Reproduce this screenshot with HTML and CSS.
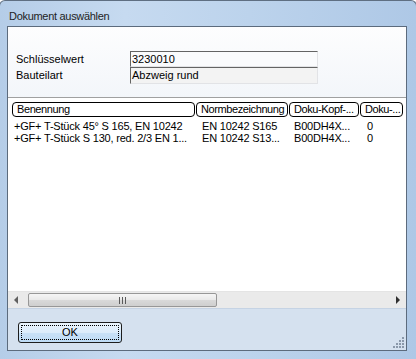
FILE: index.html
```html
<!DOCTYPE html>
<html lang="de">
<head>
    <meta charset="UTF-8">
    <title>Dokument auswählen</title>
    <link rel="stylesheet" href="styles.css">
</head>
<body>
    <div class="window">
        <div class="titlebar">Dokument auswählen</div>
        <div class="client">
            <div class="keys">
                <label>Schlüsselwert</label>
                <div class="field">3230010</div>
                <label>Bauteilart</label>
                <div class="field readonly">Abzweig rund</div>
            </div>

            <div class="list">
                <div class="header">
                    <div class="col c1"><span class="head">Benennung</span></div>
                    <div class="col c2"><span class="head">Normbezeichnung</span></div>
                    <div class="col c3"><span class="head">Doku-Kopf-...</span></div>
                    <div class="col c4"><span class="head">Doku-...</span></div>
                </div>
                <div class="rows">
                    <div class="row">
                        <div class="col c1">+GF+ T-Stück 45° S 165, EN 10242</div>
                        <div class="col c2">EN 10242 S165</div>
                        <div class="col c3">B00DH4X...</div>
                        <div class="col c4">0</div>
                    </div>
                    <div class="row">
                        <div class="col c1">+GF+ T-Stück S 130, red. 2/3 EN 1...</div>
                        <div class="col c2">EN 10242 S13...</div>
                        <div class="col c3">B00DH4X...</div>
                        <div class="col c4">0</div>
                    </div>
                </div>
                <div class="hscroll">
                    <div class="arrow left"></div>
                    <div class="track">
                        <div class="thumb"><span class="grip"></span></div>
                    </div>
                    <div class="arrow right"></div>
                </div>
            </div>

            <div class="footer">
                <button class="ok"><span class="focus">OK</span></button>
                <svg class="sizegrip" width="12" height="12" viewBox="0 0 12 12">
                    <g fill="#8a98aa">
                        <rect x="9" y="0" width="2" height="2"/>
                        <rect x="6" y="3" width="2" height="2"/>
                        <rect x="9" y="3" width="2" height="2"/>
                        <rect x="3" y="6" width="2" height="2"/>
                        <rect x="6" y="6" width="2" height="2"/>
                        <rect x="9" y="6" width="2" height="2"/>
                        <rect x="0" y="9" width="2" height="2"/>
                        <rect x="3" y="9" width="2" height="2"/>
                        <rect x="6" y="9" width="2" height="2"/>
                        <rect x="9" y="9" width="2" height="2"/>
                    </g>
                </svg>
            </div>
        </div>
    </div>
</body>
</html>
```

FILE: styles.css
```css
html, body {
    margin: 0;
    padding: 0;
}
body {
    width: 416px;
    height: 359px;
    overflow: hidden;
    background: #ffffff;
    font-family: 'Liberation Sans', Arial, sans-serif;
    font-size: 11px;
    color: #000;
}
.window {
    box-sizing: border-box;
    width: 418px;
    height: 359px;
    margin-left: -1px;
    display: flex;
    flex-direction: column;
    padding: 0 9px 8px 7px;
    background: linear-gradient(90deg, #b5cde8 0%, #c6daf0 30%, #bcd3ec 60%, #aec8e6 100%);
    border: 1px solid #5f6f82;
    border-bottom: none;
    border-radius: 6px 6px 0 0;
}
.titlebar {
    height: 25px;
    box-sizing: border-box;
    padding: 8px 0 0 2px;
    line-height: 14px;
    font-size: 11px;
    letter-spacing: -0.3px;
    color: #1e1e1e;
    flex-shrink: 0;
}
.client {
    flex: 1;
    display: flex;
    flex-direction: column;
    border: 1px solid #5c6b7d;
    background: #fff;
    min-height: 0;
}
.keys {
    height: 70px;
    box-sizing: border-box;
    padding: 24px 0 0 8px;
    display: grid;
    grid-template-columns: 114px 188px;
    grid-auto-rows: 16px;
    align-items: center;
    background: linear-gradient(180deg, #fdfdfe 0%, #f3f6fa 100%);
}
.field {
    box-sizing: border-box;
    height: 16px;
    line-height: 14px;
    padding-left: 1px;
    border: 1px solid #e2e3e6;
    border-top-color: #646464;
    border-left-color: #646464;
    background: #fafbfd;
}
.field.readonly {
    height: 17px;
    background: #f3f3f3;
}
.list {
    flex: 1;
    display: flex;
    flex-direction: column;
    border-top: 1px solid #a0a0a0;
    background: #fff;
    min-height: 0;
}
.header, .row {
    display: flex;
    padding-left: 3px;
}
.header {
    padding-left: 4px;
    margin-top: 4px;
    height: 15px;
}
.col {
    flex-shrink: 0;
    white-space: nowrap;
    overflow: hidden;
    box-sizing: border-box;
}
.c1 { width: 185px; }
.c2 { width: 93px; }
.c3 { width: 71px; }
.c4 { width: 44px; }
.header .c1 { width: 184px; }
.header .col {
    padding-right: 1px;
}
.head {
    display: block;
    box-sizing: border-box;
    height: 15px;
    line-height: 13px;
    padding-left: 4px;
    border: 1px solid #000;
    border-radius: 4px;
    background: #fff;
    letter-spacing: -0.4px;
}
.rows {
    flex: 1;
    padding-top: 3px;
}
.row {
    height: 12px;
    line-height: 12px;
    letter-spacing: -0.2px;
}
.row .c1 { padding-left: 3px; }
.row .c2 { padding-left: 6px; }
.row .c3 { padding-left: 5px; }
.row .c4 { padding-left: 7px; }
.hscroll {
    height: 16px;
    display: flex;
    align-items: center;
    background: #eaeaea;
    border-top: 1px solid #e4e4e4;
    flex-shrink: 0;
}
.arrow {
    width: 19px;
    height: 16px;
    position: relative;
    flex-shrink: 0;
}
.arrow::after {
    content: '';
    position: absolute;
    top: 4px;
    border-top: 4px solid transparent;
    border-bottom: 4px solid transparent;
}
.arrow.left::after {
    left: 6px;
    border-right: 4px solid #606060;
}
.arrow.right::after {
    left: 9px;
    border-left: 4px solid #303030;
}
.track {
    flex: 1;
    height: 14px;
}
.thumb {
    box-sizing: border-box;
    width: 189px;
    height: 14px;
    margin-left: 1px;
    border: 1px solid #979797;
    border-radius: 2px;
    background: linear-gradient(180deg, #f5f5f5 0%, #e9e9e9 50%, #d9d9d9 51%, #cfcfcf 100%);
    display: flex;
    align-items: center;
    justify-content: center;
}
.grip {
    width: 7px;
    height: 7px;
    background: repeating-linear-gradient(90deg, #5a5a5a 0 1px, transparent 1px 3px);
}
.footer {
    height: 42px;
    flex-shrink: 0;
    position: relative;
    background: #d5e1ef;
    border-top: 1px solid #c5d3e4;
    box-sizing: border-box;
}
.ok {
    margin: 13px 0 0 10px;
    width: 104px;
    height: 21px;
    padding: 2px;
    border: 1px solid #1d1d1d;
    border-radius: 3px;
    background: linear-gradient(180deg, #eaf4fc 0%, #dcecfb 50%, #c9e1f7 51%, #bedbf5 100%);
    font-family: 'Liberation Sans', Arial, sans-serif;
    font-size: 11px;
    color: #000;
    display: flex;
}
.ok .focus {
    flex: 1;
    border: 1px dotted #000;
    border-radius: 1px;
    line-height: 13px;
    text-align: center;
}
.sizegrip {
    position: absolute;
    right: 1px;
    bottom: 1px;
}
```
